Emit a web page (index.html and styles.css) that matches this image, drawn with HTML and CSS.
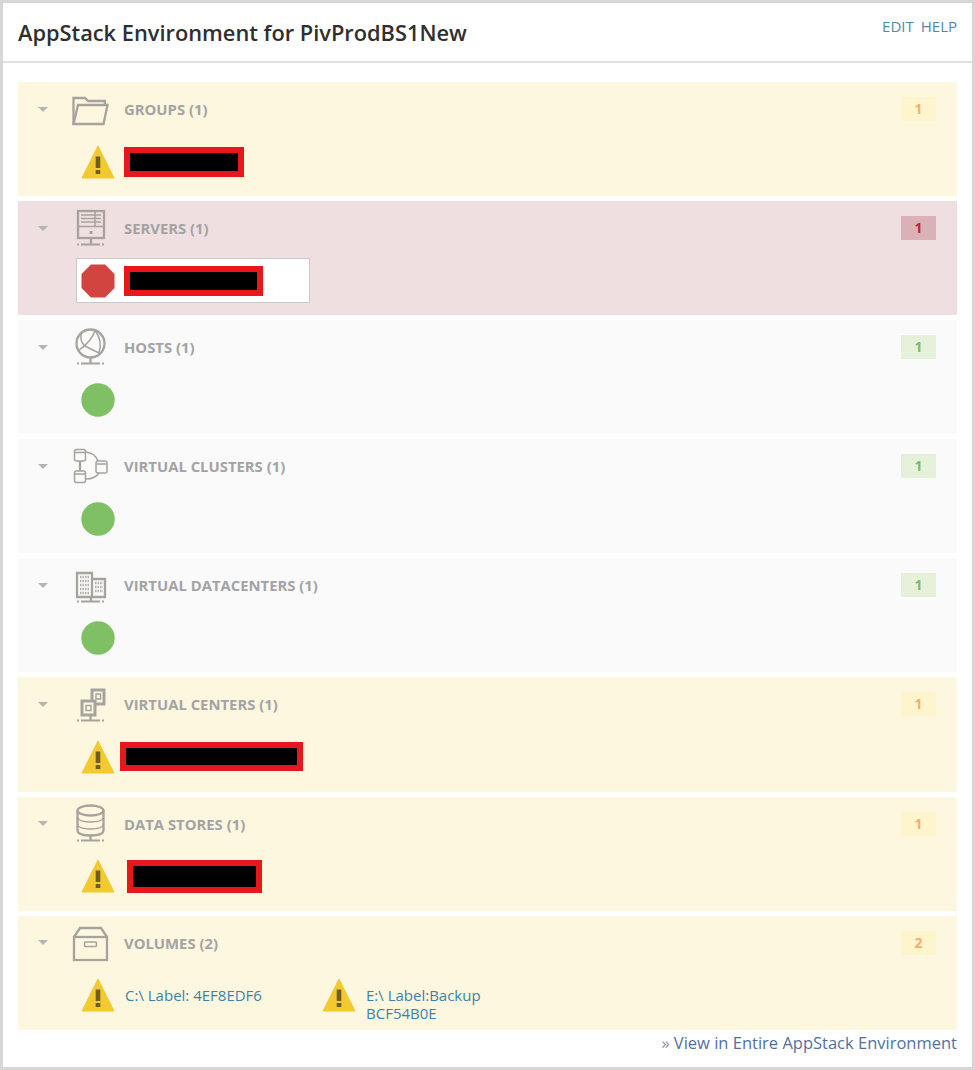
FILE: index.html
```html
<!DOCTYPE html>
<html lang="en">
<head>
  <meta charset="UTF-8">
  <title>AppStack Environment</title>
  <link rel="stylesheet" href="styles.css">
</head>
<body>
  <svg class="defs" xmlns="http://www.w3.org/2000/svg">
    <symbol id="warn" viewBox="0 0 34 34">
      <path d="M17 1 L33 33 H1 Z" fill="#f2c92e" stroke="#f2c92e" stroke-linejoin="round"/>
      <rect x="14.7" y="11.5" width="4.6" height="11.5" fill="#6f5d22"/>
      <rect x="14.7" y="25" width="4.6" height="4" fill="#6f5d22"/>
    </symbol>
    <symbol id="stop" viewBox="0 0 34 34">
      <path d="M10 0.5 H24 L33.5 10 V24 L24 33.5 H10 L0.5 24 V10 Z" fill="#d2443f"/>
    </symbol>
    <symbol id="ok" viewBox="0 0 34 34">
      <circle cx="17" cy="17" r="16.7" fill="#7fc064"/>
    </symbol>
    <symbol id="base" viewBox="0 0 44 44">
      <path d="M13 38.5 H32" stroke-width="2"/>
      <path d="M9 38.5 H11 M34 38.5 H36" stroke-width="2"/>
    </symbol>
  </svg>

  <div class="panel">
    <div class="panel-head">
      <h1>AppStack Environment for PivProdBS1New</h1>
      <div class="panel-links"><a>EDIT</a><a>HELP</a></div>
    </div>

    <div class="sections">
      <div class="section warning">
        <div class="head">
          <span class="arrow"></span>
          <svg class="type-icon" viewBox="0 0 44 44">
            <path d="M5.5 37 V11 H17 L20 14 H37 V18"/>
            <path d="M5.5 37 L10 18 H39.5 L35.5 37 Z"/>
          </svg>
          <span class="label">GROUPS (1)</span>
          <span class="badge">1</span>
        </div>
        <div class="body">
          <div class="item">
            <svg class="status"><use href="#warn"/></svg>
            <span class="redact redact-group"></span>
          </div>
        </div>
      </div>

      <div class="section critical">
        <div class="head">
          <span class="arrow"></span>
          <svg class="type-icon" viewBox="0 0 44 44">
            <rect x="10" y="5" width="26" height="27"/>
            <path class="thin" d="M13 9 H33 M13 12.5 H33 M13 16 H33 M27 6 V20"/>
            <path class="thin" d="M10 20.5 H36"/>
            <rect class="dot" x="21.5" y="25" width="3" height="3"/>
            <path d="M23 32 V38"/>
            <use href="#base"/>
          </svg>
          <span class="label">SERVERS (1)</span>
          <span class="badge">1</span>
        </div>
        <div class="body">
          <div class="item item-card">
            <svg class="status"><use href="#stop"/></svg>
            <span class="redact redact-server"></span>
          </div>
        </div>
      </div>

      <div class="section neutral">
        <div class="head">
          <span class="arrow"></span>
          <svg class="type-icon" viewBox="0 0 44 44">
            <circle cx="22.5" cy="18.5" r="14"/>
            <path class="thin" d="M27 5.5 Q24 16 10 26 M13 9 Q12 17 17 21 L31 28 M27 5.5 Q35 16 31 28"/>
            <path d="M22.5 32.5 V38"/>
            <use href="#base"/>
          </svg>
          <span class="label">HOSTS (1)</span>
          <span class="badge">1</span>
        </div>
        <div class="body">
          <div class="item"><svg class="status"><use href="#ok"/></svg></div>
        </div>
      </div>

      <div class="section neutral">
        <div class="head">
          <span class="arrow"></span>
          <svg class="type-icon" viewBox="0 0 44 44">
            <g class="thin">
              <rect x="6.5" y="5.5" width="11" height="11.5" rx="2"/>
              <rect x="6.5" y="27" width="11" height="11.5" rx="2"/>
              <rect x="28" y="17" width="11" height="12" rx="2"/>
              <path d="M7 8.5 H17 M7 30 H17 M28.5 20 H38.5"/>
              <path d="M18 8 Q27 9 30 17 M18 35 Q27 35 31 29"/>
            </g>
            <path d="M12 17 V27"/>
          </svg>
          <span class="label">VIRTUAL CLUSTERS (1)</span>
          <span class="badge">1</span>
        </div>
        <div class="body">
          <div class="item"><svg class="status"><use href="#ok"/></svg></div>
        </div>
      </div>

      <div class="section neutral">
        <div class="head">
          <span class="arrow"></span>
          <svg class="type-icon" viewBox="0 0 44 44">
            <path d="M9 34 V10 H24 V34 M24 16 H37 V34"/>
            <path class="windows" d="M12 14 H22 M12 18 H22 M12 22 H22 M12 26 H22 M12 30 H22 M27 20 H35 M27 24 H35 M27 28 H35"/>
            <path d="M8 34 H38 M23 34 V38"/>
            <use href="#base"/>
          </svg>
          <span class="label">VIRTUAL DATACENTERS (1)</span>
          <span class="badge">1</span>
        </div>
        <div class="body">
          <div class="item"><svg class="status"><use href="#ok"/></svg></div>
        </div>
      </div>

      <div class="section warning">
        <div class="head">
          <span class="arrow"></span>
          <svg class="type-icon" viewBox="0 0 44 44">
            <path class="heavy" d="M24 19 V8 H36 V22 H27"/>
            <rect class="heavy" x="14" y="19" width="13" height="14"/>
            <rect class="thin" x="28" y="12" width="4.5" height="5"/>
            <rect class="thin" x="18" y="23.5" width="5" height="5"/>
            <path d="M22.5 33 V38"/>
            <use href="#base"/>
          </svg>
          <span class="label">VIRTUAL CENTERS (1)</span>
          <span class="badge">1</span>
        </div>
        <div class="body">
          <div class="item">
            <svg class="status"><use href="#warn"/></svg>
            <span class="redact redact-center"></span>
          </div>
        </div>
      </div>

      <div class="section warning">
        <div class="head">
          <span class="arrow"></span>
          <svg class="type-icon" viewBox="0 0 44 44">
            <ellipse cx="22.5" cy="8.5" rx="13" ry="5"/>
            <path d="M9.5 8.5 V28 Q9.5 33.5 22.5 33.5 Q35.5 33.5 35.5 28 V8.5"/>
            <path class="thin" d="M9.5 15 Q10 20 22.5 20 Q35 20 35.5 15 M9.5 22 Q10 27 22.5 27 Q35 27 35.5 22"/>
            <path d="M22.5 33.5 V38"/>
            <use href="#base"/>
          </svg>
          <span class="label">DATA STORES (1)</span>
          <span class="badge">1</span>
        </div>
        <div class="body">
          <div class="item">
            <svg class="status"><use href="#warn"/></svg>
            <span class="redact redact-store"></span>
          </div>
        </div>
      </div>

      <div class="section warning">
        <div class="head">
          <span class="arrow"></span>
          <svg class="type-icon" viewBox="0 0 44 44">
            <path d="M6 16 L12 7 H33 L39 16"/>
            <rect x="6" y="16" width="33" height="23"/>
            <rect class="thin" x="16.5" y="21" width="12" height="4.5" rx="1"/>
          </svg>
          <span class="label">VOLUMES (2)</span>
          <span class="badge">2</span>
        </div>
        <div class="body">
          <div class="item item-volume">
            <svg class="status"><use href="#warn"/></svg>
            <a class="volume-name">C:\ Label: 4EF8EDF6</a>
          </div>
          <div class="item item-volume">
            <svg class="status"><use href="#warn"/></svg>
            <a class="volume-name">E:\ Label:Backup<br>BCF54B0E</a>
          </div>
        </div>
      </div>
    </div>

    <div class="panel-foot"><a><span class="raquo">»</span> View in Entire AppStack Environment</a></div>
  </div>
</body>
</html>
```

FILE: styles.css
```css
html, body {
  margin: 0;
  padding: 0;
}
body {
  font-family: "Open Sans", "Liberation Sans", sans-serif;
  background: #fff;
}
.defs {
  display: none;
}
.panel {
  box-sizing: border-box;
  width: 975px;
  height: 1070px;
  border: 3px solid #d6d6d6;
  background: #fff;
}
.panel-head {
  box-sizing: border-box;
  height: 60px;
  padding: 0 15px;
  display: flex;
  justify-content: space-between;
  border-bottom: 2px solid #e0e0e0;
}
.panel-head h1 {
  margin: 16px 0 0;
  font-size: 21.8px;
  line-height: 27px;
  font-weight: 600;
  color: #2f2f2f;
}
.panel-links {
  margin-top: 14px;
  display: flex;
  gap: 7px;
  font-size: 15px;
  line-height: 18px;
  color: #4f8aa8;
}
.sections {
  margin: 19px 15px 0;
  display: flex;
  flex-direction: column;
  gap: 5px;
}
.section {
  height: 114.1px;
}
.section.warning { background: #fef7e0; }
.section.critical { background: #f0dfe0; }
.section.neutral { background: #fafafa; }
.head {
  height: 54px;
  padding-right: 21px;
  display: flex;
  align-items: center;
}
.arrow {
  width: 0;
  height: 0;
  margin-left: 20px;
  border-left: 5.5px solid transparent;
  border-right: 5.5px solid transparent;
  border-top: 5px solid #b5b5b0;
}
.type-icon {
  width: 44px;
  height: 44px;
  margin-left: 20px;
  fill: none;
  stroke: #a5a39b;
  stroke-width: 2.3;
}
.type-icon .thin {
  stroke-width: 1.5;
}
.type-icon .heavy {
  stroke-width: 3;
}
.type-icon .windows {
  stroke-width: 2.5;
  stroke-dasharray: 1.5 1;
  opacity: 0.85;
}
.type-icon .dot {
  fill: #a5a39b;
  stroke: none;
}
.label {
  margin-left: 12px;
  font-size: 14.85px;
  font-weight: 700;
  color: #a3a3a3;
}
.badge {
  box-sizing: border-box;
  width: 35px;
  height: 24px;
  margin-left: auto;
  text-align: center;
  font-size: 14px;
  line-height: 24px;
  font-weight: 700;
}
.warning .badge { background: #fff5cd; color: #f3ae6c; }
.critical .badge { background: #d9b1b7; color: #b3263a; }
.neutral .badge { background: #e6f1da; color: #7cb96a; }
.body {
  padding: 3px 0 0 58px;
  display: flex;
}
.item {
  box-sizing: border-box;
  height: 45px;
  border: 1px solid transparent;
  padding: 4px;
  display: flex;
  align-items: center;
}
.item-card {
  width: 234px;
  background: #fff;
  border-color: #c9c9c9;
}
.item-volume {
  width: 241px;
  align-items: flex-start;
}
.status {
  flex: none;
  width: 34px;
  height: 34px;
}
.redact {
  box-sizing: border-box;
  display: block;
  background: #000;
  border: 6px solid #e8171b;
}
.redact-group { width: 120px; height: 30px; margin-left: 9px; }
.redact-server { width: 139px; height: 30px; margin-left: 9px; }
.redact-center { width: 183px; height: 29px; margin-left: 5px; }
.redact-store { width: 135px; height: 33px; margin-left: 12px; }
.volume-name {
  margin: 8px 0 0 10px;
  font-size: 15px;
  line-height: 18px;
  white-space: nowrap;
  color: #3a83a8;
}
.panel-foot {
  margin: 3px 15px 0;
  text-align: right;
  font-size: 16.5px;
  line-height: 20px;
  color: #52709f;
}
.raquo {
  color: #8a8fa5;
}
```
